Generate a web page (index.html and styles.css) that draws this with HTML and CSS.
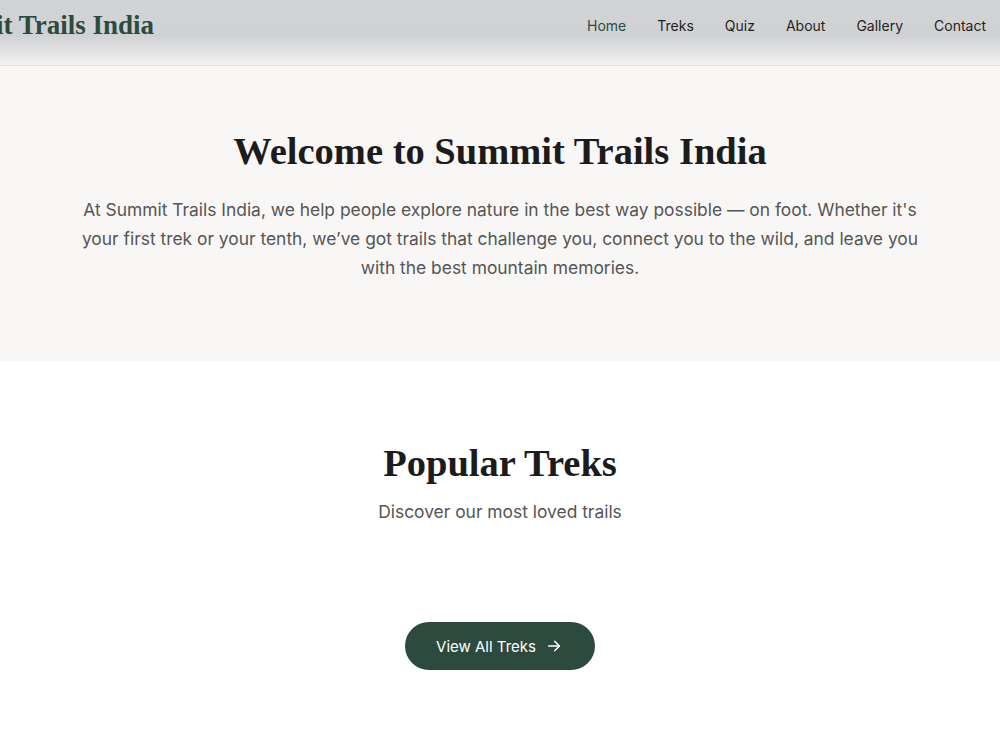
FILE: index.html
```html
<!DOCTYPE html>
<html lang="en">
<head>
    <meta charset="UTF-8">
    <meta name="viewport" content="width=device-width, initial-scale=1.0">
    <title>Summit Trails India</title>
    <link rel="stylesheet" href="styles.css">
</head>
<body>
    <header class="site-header">
        <a href="#" class="logo">Summit Trails India</a>
        <nav class="nav">
            <a href="#" class="nav-link active">Home</a>
            <a href="#" class="nav-link">Treks</a>
            <a href="#" class="nav-link">Quiz</a>
            <a href="#" class="nav-link">About</a>
            <a href="#" class="nav-link">Gallery</a>
            <a href="#" class="nav-link">Contact</a>
        </nav>
    </header>

    <section class="hero">
        <h1 class="hero-title">Welcome to Summit Trails India</h1>
        <p class="hero-text">At Summit Trails India, we help people explore nature in the best way possible — on foot. Whether it's your first trek or your tenth, we’ve got trails that challenge you, connect you to the wild, and leave you with the best mountain memories.</p>
    </section>

    <section class="popular">
        <h2 class="section-title">Popular Treks</h2>
        <p class="section-sub">Discover our most loved trails</p>
        <div class="trek-list"></div>
        <a href="#" class="btn">
            View All Treks
            <svg class="btn-arrow" width="16" height="16" viewBox="0 0 24 24" fill="none" stroke="currentColor" stroke-width="2.2" stroke-linecap="round" stroke-linejoin="round">
                <path d="M4 12h16"></path>
                <path d="M13 5l7 7-7 7"></path>
            </svg>
        </a>
    </section>
</body>
</html>
```

FILE: styles.css
```css
* {
    box-sizing: border-box;
}
body {
    margin: 0;
    font-family: Inter, "Noto Sans", sans-serif;
    color: #222;
    background-color: #fff;
    overflow-x: hidden;
}
a {
    text-decoration: none;
    color: inherit;
}
.site-header {
    height: 66px;
    display: flex;
    align-items: center;
    justify-content: space-between;
    padding: 0 14px 14px 0;
    background: linear-gradient(to bottom, #d3d4d6 0%, #d0d1d3 55%, #efefef 95%, #f1f1f1 100%);
    border-bottom: 1px solid #e6e4e0;
}
.logo {
    font-family: "Liberation Serif", serif;
    font-weight: 700;
    font-size: 27px;
    color: #2c4a3e;
    margin-left: -79px;
    white-space: nowrap;
}
.nav {
    display: flex;
    gap: 31px;
}
.nav-link {
    font-size: 14px;
    color: #1f1f1f;
}
.nav-link.active {
    color: #2c4a3e;
}
.hero {
    background-color: #f8f7f5;
    height: 295px;
    padding: 63px 60px 0;
    text-align: center;
}
.hero-title {
    font-family: "Liberation Serif", serif;
    font-weight: 700;
    font-size: 38.5px;
    color: #1c1c1c;
    margin: 0 0 22px;
}
.hero-text {
    max-width: 860px;
    margin: 0 auto;
    font-size: 17.4px;
    line-height: 29px;
    color: #555;
}
.popular {
    text-align: center;
    padding-top: 80px;
}
.section-title {
    font-family: "Liberation Serif", serif;
    font-weight: 700;
    font-size: 38.5px;
    color: #1c1c1c;
    margin: 0 0 16px;
}
.section-sub {
    margin: 0;
    font-size: 17.4px;
    color: #555;
}
.trek-list {
    height: 99px;
}
.btn {
    display: inline-flex;
    align-items: center;
    gap: 10px;
    height: 48px;
    margin-top: 1px;
    padding: 0 33px 0 31px;
    border-radius: 24px;
    background-color: #2c4a3e;
    color: #fff;
    font-size: 15px;
}
.btn-arrow {
    display: block;
}
```
